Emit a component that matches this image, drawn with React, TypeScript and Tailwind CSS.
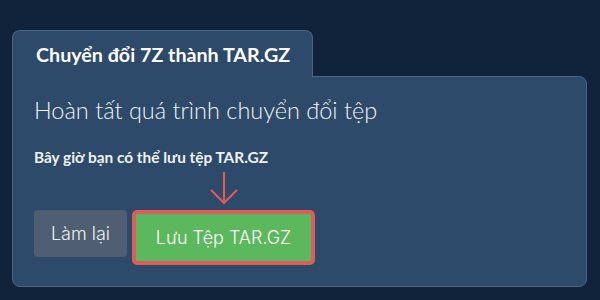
import React from "react";

export default function App() {
  return (
    <div className="w-[600px] h-[300px] bg-[#10233a] pt-[30px] pl-[12px] pr-[13px] font-['Lato',sans-serif]">
      <div className="flex flex-col">
        <div className="relative z-10 -mb-px w-[301px] h-[47px] rounded-t-lg border border-b-0 border-[#4a6584] bg-[#2d4a6a] pl-[23px] flex items-center">
          <span className="text-[19.7px] font-bold text-white leading-none pt-[1px]">
            Chuyển đổi 7Z thành TAR.GZ
          </span>
        </div>
        <div className="h-[211px] rounded-lg rounded-tl-none border border-[#4a6584] bg-[#2d4a6a] pl-[21px] pt-[18px]">
          <h1 className="text-[23.5px] leading-[30px] font-light text-[#f0f2f5]">
            Hoàn tất quá trình chuyển đổi tệp
          </h1>
          <p className="mt-[22px] text-[15.4px] leading-[20px] font-bold text-[#f0f2f5]">
            Bây giờ bạn có thể lưu tệp TAR.GZ
          </p>
          <div className="mt-[43px] flex items-start gap-[5px] font-['Inter',sans-serif]">
            <button className="w-[93px] h-[47px] rounded-[4px] bg-[#4f5e70] text-[18px] font-light text-[#eef1f5]">
              Làm lại
            </button>
            <div className="relative">
              <svg
                className="absolute bottom-full left-1/2 -translate-x-1/2 mb-[4px]"
                width="30"
                height="36"
                viewBox="0 0 30 36"
                fill="none"
                stroke="#de5b57"
                strokeWidth="2.2"
              >
                <path d="M15 2 V33" />
                <path d="M2 20 L15 33 L28 20" />
              </svg>
              <button className="w-[183px] h-[55px] rounded-[5px] border-[4px] border-[#de5d5a] bg-[#5cb85c] text-[18px] font-light text-white">
                Lưu Tệp TAR.GZ
              </button>
            </div>
          </div>
        </div>
      </div>
    </div>
  );
}
